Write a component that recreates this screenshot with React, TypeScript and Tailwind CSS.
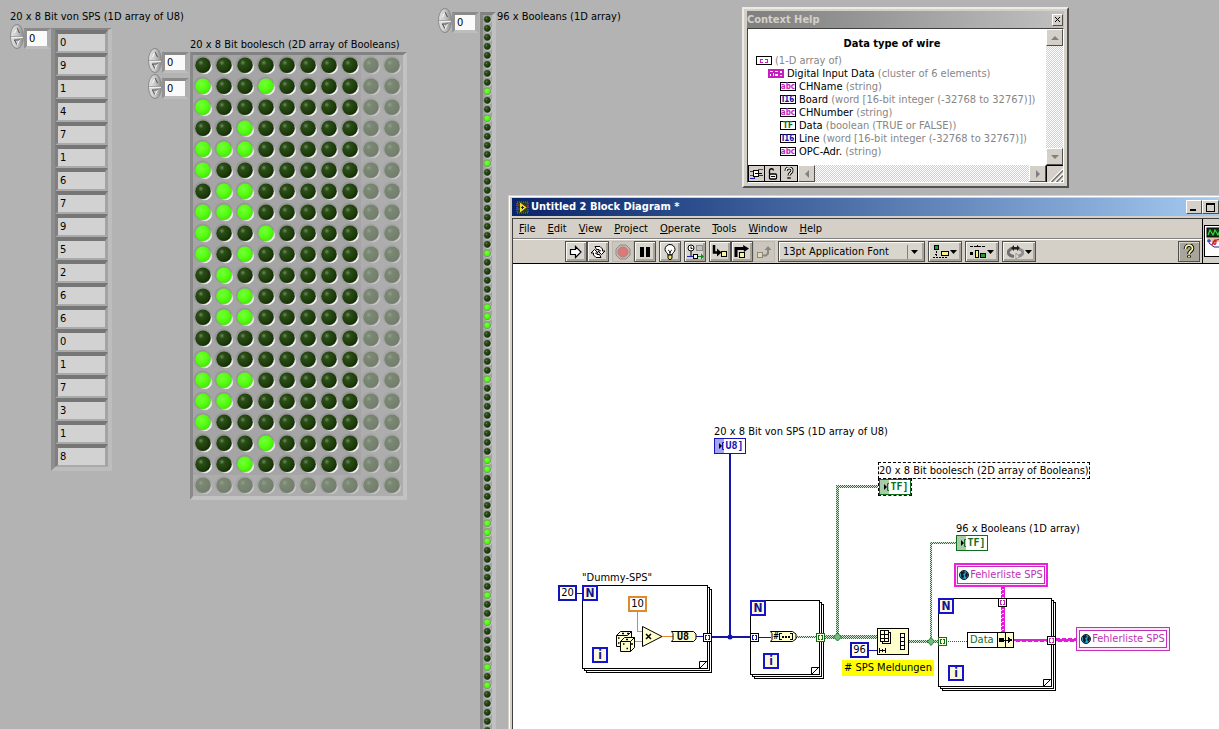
import React, { useState } from "react";
import { clsx } from "clsx";

const VALUES = [0, 9, 1, 4, 7, 1, 6, 7, 9, 5, 2, 6, 6, 0, 1, 7, 3, 1, 8, 4];
const VISIBLE_ROWS = 21;
const VISIBLE_COLS = 10;

const bitOf = (value: number, bit: number) => ((value >> bit) & 1) === 1;
const FLAT_BITS = VALUES.flatMap((v) => Array.from({ length: 8 }, (_, b) => bitOf(v, b))).slice(0, 96);

type Kind = "array" | "cluster" | "string" | "word" | "bool";

const WIRE_TYPES: { kind: Kind; name: string; type: string; indent: string }[] = [
  { kind: "array", name: "", type: "(1-D array of)", indent: "pl-2" },
  { kind: "cluster", name: "Digital Input Data", type: "(cluster of 6 elements)", indent: "pl-5" },
  { kind: "string", name: "CHName", type: "(string)", indent: "pl-8" },
  { kind: "word", name: "Board", type: "(word [16-bit integer (-32768 to 32767)])", indent: "pl-8" },
  { kind: "string", name: "CHNumber", type: "(string)", indent: "pl-8" },
  { kind: "bool", name: "Data", type: "(boolean (TRUE or FALSE))", indent: "pl-8" },
  { kind: "word", name: "Line", type: "(word [16-bit integer (-32768 to 32767)])", indent: "pl-8" },
  { kind: "string", name: "OPC-Adr.", type: "(string)", indent: "pl-8" },
];

const MENUS = ["File", "Edit", "View", "Project", "Operate", "Tools", "Window", "Help"];

/* ---------- front panel ---------- */

const IndexControl = ({ label }: { label: string }) => {
  const [index, setIndex] = useState(0);

  return (
    <div className="flex items-end">
      <div className="flex h-[25px] w-[14px] flex-col overflow-hidden rounded-[50%] border border-[#8c8c8c] bg-linear-to-r from-[#e4e4e4] via-[#c8c8c8] to-[#8e8e8e]">
        <button
          aria-label={`Increment ${label}`}
          onClick={() => setIndex(index + 1)}
          className="flex flex-1 items-center justify-center border-b border-[#a4a4a4]"
        >
          <svg width="8" height="7" viewBox="0 0 8 7">
            <path d="M1.500 6 4 1" stroke="#fafafa" fill="none" />
            <path d="M4 1l2.500 5" stroke="#4c4c4c" fill="none" />
          </svg>
        </button>
        <button
          aria-label={`Decrement ${label}`}
          onClick={() => setIndex(Math.max(0, index - 1))}
          className="flex flex-1 items-center justify-center border-t border-[#f0f0f0]"
        >
          <svg width="8" height="7" viewBox="0 0 8 7">
            <path d="M1 1h6M1.500 1 4 6" stroke="#4c4c4c" fill="none" />
            <path d="M4 6l2.500-5" stroke="#fafafa" fill="none" />
          </svg>
        </button>
      </div>
      <input
        aria-label={label}
        value={index}
        onChange={(e) => setIndex(parseInt(e.target.value) || 0)}
        className="h-[21px] w-[27px] border-3 border-r-4 border-t-[#8a8a8a] border-r-[#adadad] border-b-[#bdbdbd] border-l-[#929292] bg-[#fafafa] pl-[2px] outline-none"
      />
    </div>
  );
};

const Led = ({ on, dim }: { on: boolean; dim?: boolean }) => (
  <span className={clsx("flex h-[21px] w-[21px] items-center justify-center", dim ? "bg-[#adadad]" : "bg-[#a5a5a5]")}>
    <svg width="21" height="21" viewBox="0 0 21 21" opacity={dim ? 0.38 : 1}>
      <circle cx="9.5" cy="9.5" r="9" fill="#8e8e8e" opacity="0.6" />
      <circle cx="11.2" cy="11.4" r="7.9" fill="url(#rim)" />
      <circle cx="10" cy="10.2" r="7.7" fill={on ? "url(#led-on)" : "url(#led-off)"} />
    </svg>
  </span>
);

const SmallLed = ({ on }: { on: boolean }) => (
  <svg width="9" height="9" viewBox="0 0 9 9" className="block">
    <circle cx="4.9" cy="4.9" r="3.8" fill="#cfcfcf" />
    <circle cx="4.3" cy="4.3" r="3.6" fill="#6f7a6f" />
    <circle cx="4.3" cy="4.3" r="3.1" fill={on ? "url(#led-on)" : "url(#led-off)"} />
  </svg>
);

const Gradients = () => (
  <svg width="0" height="0" className="absolute">
    <defs>
      <radialGradient id="led-on" cx="0.38" cy="0.35" r="0.7">
        <stop offset="0" stopColor="#74ff3c" />
        <stop offset="0.5" stopColor="#58ff12" />
        <stop offset="1" stopColor="#46e40a" />
      </radialGradient>
      <radialGradient id="led-off" cx="0.36" cy="0.34" r="0.7">
        <stop offset="0" stopColor="#6d8a60" />
        <stop offset="0.25" stopColor="#2b4d17" />
        <stop offset="0.7" stopColor="#1d3d0a" />
        <stop offset="1" stopColor="#142c06" />
      </radialGradient>
      <linearGradient id="rim" x1="0" y1="0" x2="1" y2="1">
        <stop offset="0.5" stopColor="#8a8a8a" />
        <stop offset="0.8" stopColor="#f4f4f4" />
      </linearGradient>
    </defs>
  </svg>
);

const FrontPanel = () => (
  <main className="flex h-full items-start">
    <section className="w-[148px] shrink-0 pt-[9px] pl-[10px]">
      <h2 className="leading-[15px] whitespace-nowrap">20 x 8 Bit von SPS (1D array of U8)</h2>
      <div className="flex items-start">
        <IndexControl label="U8 array index" />
        <ul className="mt-1 border-4 border-t-2 border-t-[#868686] border-r-[#bdbdbd] border-b-[#bdbdbd] border-l-[#8e8e8e]">
          {VALUES.slice(0, 19).map((v, i) => (
            <li
              key={i}
              className="h-[23px] w-[53px] border-3 border-t-4 border-b-2 border-t-[#767676] border-r-[#a3a3a3] border-b-[#aaaaaa] border-l-[#808080] bg-[#d2d2d2] pl-[2px] leading-[18px]"
            >
              {v}
            </li>
          ))}
        </ul>
      </div>
    </section>

    <section className="flex shrink-0 items-start">
      <div className="flex flex-col gap-[1px] pt-12">
        <IndexControl label="Row index" />
        <IndexControl label="Column index" />
      </div>
      <div className="pt-[37px] pl-[1px]">
        <h2 className="leading-[15px] whitespace-nowrap">20 x 8 Bit boolesch (2D array of Booleans)</h2>
        <div className="grid w-[217px] grid-cols-10 border-4 border-t-3 border-l-3 border-t-[#828282] border-r-[#c2c2c2] border-b-[#c2c2c2] border-l-[#8a8a8a]">
          {Array.from({ length: VISIBLE_ROWS * VISIBLE_COLS }, (_, i) => {
            const row = Math.floor(i / VISIBLE_COLS);
            const col = i % VISIBLE_COLS;
            const outside = row >= VALUES.length || col >= 8;
            return <Led key={i} on={!outside && bitOf(VALUES[row], col)} dim={outside} />;
          })}
        </div>
      </div>
    </section>

    <section className="ml-[31px] flex shrink-0 items-start">
      <div className="pt-2 pr-[1px]">
        <IndexControl label="Boolean index" />
      </div>
      <div className="pt-3">
        <div className="border-4 border-t-3 border-l-3 border-t-[#828282] border-r-[#c0c0c0] border-b-[#c0c0c0] border-l-[#868686] bg-[#a2a2a2]">
          {FLAT_BITS.map((on, i) => (
            <SmallLed key={i} on={on} />
          ))}
        </div>
      </div>
      <h2 className="pt-[9px] pl-[1px] leading-[15px] whitespace-nowrap">96 x Booleans (1D array)</h2>
    </section>
  </main>
);

/* ---------- context help ---------- */

const TypeIcon = ({ kind }: { kind: Kind }) => {
  if (kind === "cluster") {
    return (
      <svg width="16" height="9" viewBox="0 0 16 9" shapeRendering="crispEdges">
        <rect width="16" height="9" fill="#c81ec0" />
        <path d="M2 2h3v1H2zM2 5h1v2H2zM5 4h1v3H5zM7 2h3v1H7zM7 5h3v2H7zM12 2h2v2h-2zM12 6h2v1h-2z" fill="#fff" />
      </svg>
    );
  }
  if (kind === "array") {
    return (
      <svg width="16" height="9" viewBox="0 0 16 9" shapeRendering="crispEdges">
        <rect x="0.5" y="0.5" width="15" height="8" fill="#fff" stroke="#000" />
        <path d="M7 3.500H4.500V6.500H7M9 3.500h2.500v3H9" fill="none" stroke="#c81ec0" />
      </svg>
    );
  }
  return (
    <span
      className={clsx(
        "flex h-[9px] w-4 items-center justify-center border border-black bg-white text-[8px] leading-none font-bold",
        kind === "string" && "text-[#c81ec0]",
        kind === "word" && "text-[#1414b4]",
        kind === "bool" && "text-[#0f6e1e]"
      )}
    >
      {kind === "string" ? "abc" : kind === "word" ? "I16" : "TF"}
    </span>
  );
};

const BEVEL =
  "flex items-center justify-center border border-t-white border-l-white border-r-[#505050] border-b-[#505050] bg-[#d4d0c8]";
const TRACK = "bg-[repeating-conic-gradient(#ffffff_0_25%,#d4d0c8_0_50%)] bg-size-[2px_2px]";

const Arrow = ({ d }: { d: string }) => (
  <svg width="8" height="8" viewBox="0 0 8 8">
    <path d={d} fill="#808080" />
  </svg>
);

const ContextHelp = () => (
  <section className="absolute top-[7px] left-[742px] flex h-[181px] w-[327px] flex-col border-2 border-t-[#ecebe6] border-r-[#505050] border-b-[#505050] border-l-[#ecebe6] bg-[#d4d0c8] p-[3px] pt-[2px]">
    <header className="flex h-[17px] items-center justify-between bg-linear-to-r from-[#7f7f7f] to-[#c0c0c0] pr-[1px]">
      <h2 className="font-bold text-[#d4d0c8]">Context Help</h2>
      <button aria-label="Close" className={clsx(BEVEL, "h-3 w-[11px]")}>
        <svg width="7" height="7" viewBox="0 0 7 7">
          <path d="M1 1l5 5M6 1 1 6" stroke="#000" />
        </svg>
      </button>
    </header>
    <div className="flex min-h-0 flex-1 flex-col border border-t-[#404040] border-r-white border-b-white border-l-[#404040]">
      <div className="flex min-h-0 flex-1 bg-white">
        <div className="flex-1 pt-2">
          <h3 className="mb-[3px] pr-[10px] text-center leading-[14px] font-bold">Data type of wire</h3>
          <ul>
            {WIRE_TYPES.map((t, i) => (
              <li key={i} className={clsx("flex h-[13px] items-center gap-[3px] leading-[13px] whitespace-nowrap", t.indent)}>
                <TypeIcon kind={t.kind} />
                <span className="text-[#868686]">
                  {t.name && <span className="text-black">{t.name} </span>}
                  {t.type}
                </span>
              </li>
            ))}
          </ul>
        </div>
        <div className={clsx("flex w-[17px] flex-col justify-between", TRACK)}>
          <button aria-label="Scroll up" className={clsx(BEVEL, "h-[17px]")}>
            <Arrow d="M4 2l4 4H0z" />
          </button>
          <button aria-label="Scroll down" className={clsx(BEVEL, "h-[17px]")}>
            <Arrow d="M0 2h8L4 6z" />
          </button>
        </div>
      </div>
      <div className={clsx("flex h-[17px] shrink-0", TRACK)}>
        <button aria-label="Show optional terminals" className="flex w-[17px] items-center justify-center border border-black bg-[#d4d0c8]">
          <svg width="13" height="13" viewBox="0 0 13 13" shapeRendering="crispEdges">
            <path d="M8 2.500h5M0 8.500h4" stroke="#d02020" />
            <path d="M0 4.500h4M9 8.500h4M0 11.500h4v-2" stroke="#2020c0" fill="none" />
            <rect x="3.500" y="3.500" width="5" height="6" fill="#fff" stroke="#000" />
            <path d="M5 6.500h3M9 6.500h3" stroke="#000" />
          </svg>
        </button>
        <button aria-label="Lock help" className="flex w-4 items-center justify-center border border-l-0 border-black bg-[#d4d0c8]">
          <svg width="11" height="12" viewBox="0 0 11 12">
            <path d="M2.500 6V3a2 2 0 0 1 4-.5" fill="none" stroke="#000" strokeWidth="1.300" />
            <rect x="2.500" y="6" width="7" height="5" rx="1" fill="#fff" stroke="#000" strokeWidth="1.300" />
            <path d="M4 8.500h4" stroke="#000" />
          </svg>
        </button>
        <button aria-label="Detailed help" className="flex w-[17px] items-center justify-center border border-l-0 border-black bg-[#d4d0c8]">
          <svg width="10" height="13" viewBox="0 0 10 13">
            <path d="M2 4c0-4 6-4 6-.5C8 6 5 6 5 8.500M5 10v2" fill="none" stroke="#000" strokeWidth="3" />
            <path d="M2 4c0-4 6-4 6-.5C8 6 5 6 5 8.500M5 10.500v1" fill="none" stroke="#fff" strokeWidth="1.200" />
          </svg>
        </button>
        <button aria-label="Scroll left" className={clsx(BEVEL, "w-[17px]")}>
          <Arrow d="M6 0v8L2 4z" />
        </button>
        <span className="flex-1" />
        <button aria-label="Scroll right" className={clsx(BEVEL, "w-[17px]")}>
          <Arrow d="M2 0l4 4-4 4z" />
        </button>
        <svg width="17" height="17" viewBox="0 0 17 17" className="bg-[#d4d0c8]">
          <path d="M.5 17V.5H17" fill="none" stroke="#000" />
          <path d="M4 17 17 4M9 17l8-8M14 17l3-3" stroke="#fff" strokeWidth="1.500" />
          <path d="M5.500 17 17 5.500M10.500 17l6.500-6.500M15.500 17l1.500-1.500" stroke="#707070" strokeWidth="1.500" />
        </svg>
      </div>
    </div>
  </section>
);

/* ---------- block diagram ---------- */

const ToolButton = ({ label, wide, flat, children }: { label: string; wide?: boolean; flat?: boolean; children: React.ReactNode }) => (
  <button
    aria-label={label}
    className={clsx(
      "flex h-[21px] items-center justify-center gap-[1px] border",
      wide ? "w-[34px]" : "w-[22px]",
      flat
        ? "border-[#bcb8b0] bg-[#cbc7bf]"
        : "border-[#505050] bg-[#d8d5cd] shadow-[inset_1px_1px_0_#f8f8f4,inset_-2px_-2px_0_#a8a49c]"
    )}
  >
    {children}
  </button>
);

const Caret = () => (
  <svg width="7" height="4" viewBox="0 0 7 4">
    <path d="M0 0h7L3.500 4z" fill="#000" />
  </svg>
);

const Toolbar = () => (
  <div className="flex h-6 items-start gap-[3px] border-t border-white pt-[1px] pr-[2px] pl-[52px]">
    <div className="flex">
      <ToolButton label="Run">
        <svg width="14" height="14" viewBox="0 0 14 14">
          <path d="M1.500 4.500h5V1.500L12 7 6.500 12.500v-3h-5z" fill="#fff" stroke="#000" strokeWidth="1.200" />
        </svg>
      </ToolButton>
      <ToolButton label="Run continuously">
        <svg width="16" height="14" viewBox="0 0 16 14">
          <path d="M5 1.500h5l2.500 2.500V6H15l-3.500 3.500L8 6h2.500L9 4.500H6.500z" fill="#fff" stroke="#000" />
          <path d="M11 12.500H6L3.500 10V8H1l3.500-3.500L8 8H5.500L7 9.500h2.500z" fill="#fff" stroke="#000" />
        </svg>
      </ToolButton>
    </div>
    <div className="flex">
      <ToolButton label="Abort" flat>
        <svg width="16" height="16" viewBox="0 0 16 16">
          <path d="M5 1h6l4 4v6l-4 4H5l-4-4V5z" fill="#c9b5b0" stroke="#908c86" />
          <circle cx="8" cy="8" r="5" fill="#dc7a78" stroke="#a88480" />
        </svg>
      </ToolButton>
      <ToolButton label="Pause">
        <svg width="12" height="12" viewBox="0 0 12 12">
          <path d="M1 1h4v10H1zM7 1h4v10H7z" fill="#000" />
        </svg>
      </ToolButton>
    </div>
    <ToolButton label="Highlight execution">
      <svg width="14" height="16" viewBox="0 0 14 16">
        <path d="M5 11C5 9 2 8 2 5.500a5 5 0 0 1 10 0C12 8 9 9 9 11z" fill="#fff" stroke="#000" />
        <path d="M5 6l1.500 1L7 9l.5-2L9 6M7 8v3" fill="none" stroke="#000" strokeWidth="0.800" />
        <path d="M5 11h4v3l-1 1.500H6L5 14z" fill="#e8e070" stroke="#000" />
      </svg>
    </ToolButton>
    <ToolButton label="Retain wire values">
      <svg width="17" height="16" viewBox="0 0 17 16">
        <circle cx="4" cy="4" r="3" fill="#fff" stroke="#000" />
        <path d="M4 2.500v2h1.500M4 7v5" fill="none" stroke="#000" />
        <rect x="9.500" y="1.500" width="6" height="5" fill="#c0c0c0" stroke="#8c8c8c" />
        <path d="M0 12.500h6" stroke="#2020c0" />
        <rect x="6.500" y="10.500" width="4" height="4" fill="#fff" stroke="#000" />
        <path d="M11 12h3v-2.500l3 3-3 3V13h-3z" fill="#108c20" />
      </svg>
    </ToolButton>
    <div className="flex">
      <ToolButton label="Step into">
        <svg width="16" height="14" viewBox="0 0 16 14">
          <path d="M2 0v7.500h4" fill="none" stroke="#000" strokeWidth="2.500" />
          <path d="M5 3.500 9.500 7.500 5 11.500z" fill="#000" />
          <rect x="9.500" y="6.500" width="5" height="5" fill="#f8f4a0" stroke="#000" />
        </svg>
      </ToolButton>
      <ToolButton label="Step over">
        <svg width="16" height="14" viewBox="0 0 16 14">
          <path d="M2 12V3.500h8" fill="none" stroke="#000" strokeWidth="3" />
          <path d="M9 0l6 3.500L10 7z" fill="#000" />
          <rect x="5.500" y="7.500" width="5" height="5" fill="#f8f4a0" stroke="#000" />
        </svg>
      </ToolButton>
      <ToolButton label="Step out" flat>
        <svg width="16" height="14" viewBox="0 0 16 14">
          <rect x="1.500" y="7.500" width="5" height="5" fill="#e0dcb0" stroke="#8c8880" />
          <path d="M7 10.500h3l2-2V4" fill="none" stroke="#8c8880" strokeWidth="2" />
          <path d="M8.500 5 12 1l3.500 4z" fill="#8c8880" />
        </svg>
      </ToolButton>
    </div>
    <div className="relative">
      <select
        aria-label="Text settings"
        className="block h-[21px] w-[147px] appearance-none border border-[#505050] bg-[#d8d5cd] pr-5 pl-1 shadow-[inset_1px_1px_0_#f8f8f4,inset_-2px_-2px_0_#a8a49c] outline-none"
      >
        <option>13pt Application Font</option>
      </select>
      <span className="pointer-events-none absolute top-1 right-1 flex h-[14px] w-[14px] items-center justify-center border-l border-[#808080]">
        <Caret />
      </span>
    </div>
    <ToolButton label="Align objects" wide>
      <svg width="16" height="14" viewBox="0 0 16 14" shapeRendering="crispEdges">
        <rect x="1.500" y="0.500" width="4" height="4" fill="#20a030" stroke="#000" />
        <path d="M3.500 6v5M2 9.500h3M0 12.500h15" stroke="#000" strokeDasharray="2 1" />
        <rect x="8.500" y="6.500" width="7" height="4" fill="#f8f480" stroke="#000" />
      </svg>
      <Caret />
    </ToolButton>
    <ToolButton label="Distribute objects" wide>
      <svg width="16" height="14" viewBox="0 0 16 14" shapeRendering="crispEdges">
        <path d="M0 1.500h15M7.500 0v2" stroke="#000" strokeDasharray="3 1" />
        <path d="M0 7h3v3H0z" fill="#000" />
        <rect x="5.500" y="5.500" width="3" height="7" fill="#f8f480" stroke="#000" />
        <rect x="10.500" y="8.500" width="5" height="4" fill="#20a030" stroke="#000" />
      </svg>
      <Caret />
    </ToolButton>
    <ToolButton label="Reorder" wide>
      <svg width="17" height="14" viewBox="0 0 17 14">
        <path d="M7 11.500C2 11 0 8 2 5.500L5 3" fill="none" stroke="#707070" strokeWidth="3" />
        <path d="M10 11.500c5-.5 7-3.500 5-6L12 4" fill="none" stroke="#909090" strokeWidth="3" />
        <path d="M4 3l3-3v2h3V0l3 3-3 3V4.500H7V6z" fill="#202020" />
        <path d="M9 8l3 3.500L9 14z" fill="#f0f0f0" stroke="#808080" strokeWidth="0.700" />
      </svg>
      <Caret />
    </ToolButton>
    <button aria-label="Context help" className="ml-auto flex h-[21px] w-[22px] items-center justify-center border border-[#505050] bg-[#a8a59c] shadow-[inset_1px_1px_0_#d8d5cd]">
      <svg width="12" height="15" viewBox="0 0 12 15">
        <path d="M2.500 5c0-5 7-5 7-.5C9.500 7 6 7 6 10M6 11.500v2" fill="none" stroke="#000" strokeWidth="3.600" />
        <path d="M2.500 5c0-5 7-5 7-.5C9.500 7 6 7 6 10M6 12v1.200" fill="none" stroke="#f8f4a0" strokeWidth="1.800" />
      </svg>
    </button>
  </div>
);

const Loop = ({ x, y, w, h }: { x: number; y: number; w: number; h: number }) => (
  <g fill="#fff" stroke="#000">
    <rect x={x + 4.5} y={y + 4.5} width={w} height={h} />
    <rect x={x + 2.5} y={y + 2.5} width={w} height={h} />
    <rect x={x + 0.5} y={y + 0.5} width={w} height={h} />
    <path
      d={`M${x + w - 7.5} ${y + h + 0.5}v-7h8M${x + w - 7.5} ${y + h + 0.5}l8-8`}
      fill="none"
      shapeRendering="auto"
    />
  </g>
);

const Tunnel = ({ x, y, color, fill }: { x: number; y: number; color: string; fill: string }) => (
  <g fill="none">
    <rect x={x + 0.5} y={y + 0.5} width="8" height="8" fill={fill} stroke={color === "#0f6e1e" ? color : "#000"} />
    <path d={`M${x + 4} ${y + 2.5}h-1.500v4h1.500M${x + 5} ${y + 2.5}h1.500v4h-1.500`} stroke={color} />
  </g>
);

// loops, wires and tunnels, below the nodes
const Wiring = () => (
  <svg width="706" height="465" viewBox="0 0 706 465" shapeRendering="crispEdges" className="absolute top-0 left-0">
    <defs>
      <pattern id="green" width="2" height="2" patternUnits="userSpaceOnUse">
        <rect width="2" height="2" fill="#d4ecd6" />
        <rect width="1" height="1" fill="#12802a" />
        <rect x="1" y="1" width="1" height="1" fill="#12802a" />
      </pattern>
      <pattern id="pink" width="6" height="4" patternUnits="userSpaceOnUse">
        <rect width="6" height="4" fill="#e01ed8" />
        <path d="M1 2h2v1H1zM3 1h2v1H3z" fill="#fbe0fa" />
      </pattern>
    </defs>
    <Loop x={69} y={321} w={125} h={83} />
    <Loop x={237} y={336} w={69} h={74} />
    <Loop x={425} y={334} w={113} h={88} />

    <g fill="none" stroke="#1414a8">
      <path d="M63 329.500h6M183 372.500h8M246 373.500h12M355 386.500h12" />
      <path d="M199 373h38M217 190v183" strokeWidth="2" />
    </g>
    <circle cx="217" cy="373" r="2.500" fill="#1414a8" shapeRendering="auto" />
    <path d="M124.500 348v19.500h6M149 372.500h11M121 377.500h9" fill="none" stroke="#e08a30" />

    <g fill="url(#green)">
      <path d="M283 372h20v2h-20zM311 371h53v4h-53zM323 221h3v152h-3zM323 221h42v3h-42z" />
      <path d="M396 376h30v3h-30zM417 278h2v99h-2zM417 278h26v2h-26z" />
    </g>
    <path d="M435 377.500h19" stroke="#12802a" strokeDasharray="1 1" />
    <path d="M324.500 369l4 4-4 4-4-4zM418 373.500l3.500 4-3.500 4-3.500-4z" fill="#7ab884" stroke="#12802a" shapeRendering="auto" />

    <path d="M488 322h4v46h-4zM501 375h33v3h-33zM542 374h21v4h-21z" fill="url(#pink)" />

    <Tunnel x={190} y={369} color="#1414a8" fill="#fff" />
    <Tunnel x={237} y={369} color="#1414a8" fill="#fff" />
    <Tunnel x={303} y={369} color="#0f6e1e" fill="#ffffcc" />
    <Tunnel x={425} y={373} color="#0f6e1e" fill="#ffffcc" />
    <Tunnel x={534} y={372} color="#c81ec0" fill="#fff" />
    <Tunnel x={485} y={334} color="#c81ec0" fill="#fff" />

    {/* dice */}
    <g fill="#ffffcc" stroke="#000" shapeRendering="auto">
      <path d="M103.500 371.500l4-4h11v11l-4 4h-11zM103.500 371.500h11l4-4" />
      <path d="M107.500 377.500l4-4h10v10l-4 4h-10zM107.500 377.500h10v10M117.500 377.500l4-4" />
      <path d="M109 369.500h2M114 369.500h2M105 374h1.500M105 379h1.500M110 380h1.500M113.500 384.500h1.500M113 375.500h2M119 379v2" strokeWidth="1.500" />
    </g>
    {/* multiply */}
    <path d="M129.500 362.500v20L149 372.500z" fill="#ffffcc" stroke="#000" shapeRendering="auto" />
    <path d="M133 370l5 5M138 370l-5 5" stroke="#000" strokeWidth="1.500" shapeRendering="auto" />
    {/* conversions */}
    <path d="M158.500 367.500h22l2.500 2.500v5l-2.500 2.500h-22l1.500-2v-6z" fill="#ffffcc" stroke="#000" shapeRendering="auto" />
    <path d="M257.500 367.500h22l3.500 2.500v5l-3.500 2.500h-22l1.500-2v-6z" fill="#ffffcc" stroke="#000" shapeRendering="auto" />
    <path d="M269 369.500h-2.500v6h2.500M277 369.500h2.500v6H277" fill="none" stroke="#000" />
    <path d="M269 372h2v2h-2zM272 372h2v2h-2zM275 372h2v2h-2z" fill="#000" />
    {/* reshape array */}
    <rect x="364.500" y="364.500" width="31" height="26" fill="#ffffcc" stroke="#000" />
    <path d="M367.500 366.500h8v11h-8zM371.500 366v12M367 370.500h9M367 374.500h9M376 368.500h1.500v11h-8v-2" fill="none" stroke="#000" />
    <path d="M387.500 369.500h4v16h-4zM387 373.500h5M387 377.500h5M387 381.500h5" fill="#fff" stroke="#000" />
    <path d="M366.500 384v5M369.500 385v3M372.500 384v5M366 386.500h7" stroke="#000" />
    {/* unbundle by name */}
    <rect x="454.500" y="368.500" width="46" height="15" fill="#fff" stroke="#000" />
    <rect x="484.500" y="368.500" width="16" height="15" fill="#ffffcc" stroke="#000" />
    <path d="M492.500 368v15M489 376h10" stroke="#000" strokeWidth="1" />
    <path d="M486 374h5v4h-5zM495 373l5 3-5 3z" fill="#000" />
  </svg>
);

const Constant = ({ className, children }: { className: string; children: React.ReactNode }) => (
  <span className={clsx("absolute flex h-4 w-[19px] items-center justify-center border-2 bg-white", className)}>
    {children}
  </span>
);

const LoopTerminal = ({ className, children }: { className: string; children: React.ReactNode }) => (
  <span
    className={clsx(
      "absolute flex h-4 w-4 items-center justify-center border-2 border-[#1414d0] bg-[#fbf8dc] text-[12px] leading-none font-bold text-[#14148c]",
      className
    )}
  >
    {children}
  </span>
);

const Terminal = ({ className, tint, children }: { className: string; tint: string; children: React.ReactNode }) => (
  <span className={clsx("absolute flex h-4 w-8 items-stretch border bg-white font-['DejaVu_Sans_Mono',monospace] text-[10px] leading-[14px] font-bold", className)}>
    <span className={clsx("flex w-[9px] items-center justify-end", tint)}>
      <svg width="5" height="8" viewBox="0 0 5 8">
        <path d="M0 1l3 3-3 3z" fill="#000" />
        <path d="M5 .5H3.500v7H5" fill="none" stroke="currentColor" />
      </svg>
    </span>
    <span className="flex-1 text-center">{children}</span>
  </span>
);

const GlobalVariable = ({ className, children }: { className: string; children: React.ReactNode }) => (
  <span className={clsx("absolute flex h-6 w-[94px] bg-[#fbe6fa] text-[#c030b8]", className)}>
    <span className="flex flex-1 items-center justify-center gap-[1px] border border-[#c030b8] bg-white whitespace-nowrap">
      <svg width="10" height="10" viewBox="0 0 10 10" className="shrink-0">
        <circle cx="5" cy="5" r="4.500" fill="#2aa8d0" stroke="#101820" />
        <path d="M2 2l3-1 1 2-2 1 1 2-1 3-2-2zM7 2l2 2-1 4-2-2z" fill="#101820" />
      </svg>
      {children}
    </span>
  </span>
);

const Diagram = () => (
  <div className="relative flex-1 overflow-hidden border-t border-black bg-white leading-[14px] whitespace-nowrap">
    <Wiring />

    <span className="absolute top-[161px] left-[201px]">20 x 8 Bit von SPS (1D array of U8)</span>
    <Terminal className="top-[174px] left-[201px] border-[#1414b4] text-[#1414b4]" tint="bg-[#a4a4f0]">
      U8]
    </Terminal>

    <span className="absolute top-[198px] left-[365px] h-[17px] border border-dashed border-black leading-[16px]">
      20 x 8 Bit boolesch (2D array of Booleans)
    </span>
    <Terminal
      className="top-[215px] left-[366px] border-[#0f6e1e] text-[#0f6e1e] outline-1 outline-black outline-dashed"
      tint="bg-[#a8cca8]"
    >
      TF]
    </Terminal>

    <span className="absolute top-[258px] left-[443px]">96 x Booleans (1D array)</span>
    <Terminal className="top-[271px] left-[443px] border-[#0f6e1e] text-[#0f6e1e]" tint="bg-[#a8cca8]">
      TF]
    </Terminal>

    <span className="absolute top-[307px] left-[69px]">"Dummy-SPS"</span>
    <Constant className="top-[321px] left-[45px] border-[#1414b4]">20</Constant>
    <Constant className="top-[332px] left-[115px] border-[#e08a30]">10</Constant>
    <Constant className="top-[378px] left-[337px] border-[#1414b4]">96</Constant>

    <LoopTerminal className="top-[321px] left-[69px]">N</LoopTerminal>
    <LoopTerminal className="top-[336px] left-[237px]">N</LoopTerminal>
    <LoopTerminal className="top-[334px] left-[425px]">N</LoopTerminal>
    <LoopTerminal className="top-[383px] left-[79px]">i</LoopTerminal>
    <LoopTerminal className="top-[389px] left-[250px]">i</LoopTerminal>
    <LoopTerminal className="top-[401px] left-[435px]">i</LoopTerminal>

    <span className="absolute top-[366px] left-[164px] font-['DejaVu_Sans_Mono',monospace] text-[10px] font-bold">U8</span>
    <span className="absolute top-[366px] left-[260px] text-[8px] font-bold">#</span>
    <span className="absolute top-[369px] left-[457px] text-[#0f6e1e]">Data</span>

    <span className="absolute top-[396px] left-[329px] bg-[#ffff00] px-[2px] leading-[16px]"># SPS Meldungen</span>

    <GlobalVariable className="top-[299px] left-[441px] border-2 border-[#f01ee0] p-[1px]">Fehlerliste SPS</GlobalVariable>
    <GlobalVariable className="top-[363px] left-[563px] border border-[#c030b8] p-[2px]">Fehlerliste SPS</GlobalVariable>
  </div>
);

const BlockDiagramWindow = () => (
  <section className="absolute top-[195px] right-0 bottom-0 left-[508px] flex flex-col border-t border-l border-[#d4d0c8] bg-[#d4d0c8]">
    <div className="flex min-h-0 flex-1 flex-col border-t border-l border-white pt-[1px] pl-[2px]">
      <header className="flex h-[18px] shrink-0 items-center gap-[2px] bg-linear-to-r from-[#0a246a] to-[#a6caf0] pl-1">
        <svg width="13" height="13" viewBox="0 0 13 13">
          <rect x="1" y="1" width="11" height="11" fill="#284028" stroke="#6a7c6a" strokeDasharray="1 1" />
          <path d="M0 4h4M10 6h3" stroke="#d02020" />
          <path d="M0 8h4" stroke="#3050d0" />
          <path d="M4 1.500l6.500 5L4 11.500z" fill="#f4e020" />
          <path d="M5 6.500h3M6.500 5v3" stroke="#202020" />
        </svg>
        <h1 className="font-bold text-white">Untitled 2 Block Diagram *</h1>
        <div className="ml-auto flex">
          <button aria-label="Minimize" className={clsx(BEVEL, "h-[14px] w-4")}>
            <svg width="8" height="8" viewBox="0 0 8 8">
              <path d="M0 6h6v2H0z" fill="#000" />
            </svg>
          </button>
          <button aria-label="Maximize" className={clsx(BEVEL, "h-[14px] w-[17px]")}>
            <svg width="9" height="9" viewBox="0 0 9 9" shapeRendering="crispEdges">
              <path d="M.5.5h8v8h-8zM0 1.500h9" fill="none" stroke="#000" />
            </svg>
          </button>
        </div>
      </header>
      <div className="mt-[2px] flex min-h-0 flex-1 flex-col border-t border-l border-[#404040]">
        <div className="flex shrink-0">
          <div className="min-w-0 flex-1">
            <nav className="flex h-5 items-center gap-3 border-b border-[#808080] pl-[6px]">
              {MENUS.map((m) => (
                <button key={m}>
                  <span className="underline decoration-1 underline-offset-1">{m[0]}</span>
                  {m.slice(1)}
                </button>
              ))}
            </nav>
            <Toolbar />
          </div>
          <div className="w-[17px] overflow-hidden border-l border-black pt-[6px] pl-[1px]">
            <svg width="32" height="32" viewBox="0 0 32 32">
              <rect x="0.500" y="0.500" width="31" height="31" fill="#fff" stroke="#000" />
              <rect x="3" y="3" width="24" height="9" fill="#183018" stroke="#000" />
              <path d="M4 10l2-5 3 5 2-5 3 5 2-5" fill="none" stroke="#30e040" strokeWidth="1.200" />
              <path d="M3 13h13v4H3z" fill="#e0c8b0" />
              <path d="M3 16h4M5 14v4" stroke="#2020c0" />
              <path d="M8 20c2-6 4-6 4-3s-3 3-2 0 4-2 6-3" fill="none" stroke="#d02020" strokeWidth="1.300" />
              <path d="M5 18l5 4h6" fill="none" stroke="#2020a0" />
            </svg>
          </div>
        </div>
        <Diagram />
      </div>
    </div>
  </section>
);

export default function App() {
  return (
    <div className="relative h-screen overflow-hidden bg-[#b3b3b3] font-['DejaVu_Sans_Condensed','DejaVu_Sans',sans-serif] text-[11px] leading-[14px] text-black">
      <Gradients />
      <FrontPanel />
      <ContextHelp />
      <BlockDiagramWindow />
    </div>
  );
}
